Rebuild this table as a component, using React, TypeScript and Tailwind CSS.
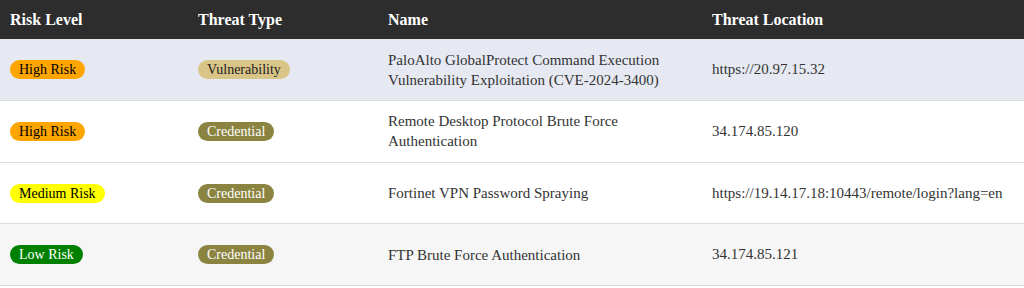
import React from "react";

type Row = {
  risk: string;
  riskClass: string;
  type: string;
  typeClass: string;
  name: string[];
  location: string;
  rowClass: string;
};

const rows: Row[] = [
  {
    risk: "High Risk",
    riskClass: "bg-[#ffa500] text-black",
    type: "Vulnerability",
    typeClass: "bg-[#d9c587] text-[#222]",
    name: ["PaloAlto GlobalProtect Command Execution", "Vulnerability Exploitation (CVE-2024-3400)"],
    location: "https://20.97.15.32",
    rowClass: "bg-[#e6e9f2]",
  },
  {
    risk: "High Risk",
    riskClass: "bg-[#ffa500] text-black",
    type: "Credential",
    typeClass: "bg-[#8b8340] text-white",
    name: ["Remote Desktop Protocol Brute Force", "Authentication"],
    location: "34.174.85.120",
    rowClass: "bg-white",
  },
  {
    risk: "Medium Risk",
    riskClass: "bg-[#ffff00] text-black",
    type: "Credential",
    typeClass: "bg-[#8b8340] text-white",
    name: ["Fortinet VPN Password Spraying"],
    location: "https://19.14.17.18:10443/remote/login?lang=en",
    rowClass: "bg-white",
  },
  {
    risk: "Low Risk",
    riskClass: "bg-[#008000] text-white",
    type: "Credential",
    typeClass: "bg-[#8b8340] text-white",
    name: ["FTP Brute Force Authentication"],
    location: "34.174.85.121",
    rowClass: "bg-[#f6f6f6]",
  },
];

const App = () => {
  return (
    <div className="w-[1024px] h-[288px] bg-white font-['Liberation_Serif',serif] text-[#333]">
      <table className="w-full border-collapse">
        <thead>
          <tr className="bg-[#2d2d2d] text-white h-[39px] text-left text-[16px] font-bold">
            <th className="w-[188px] pl-[10px]">Risk Level</th>
            <th className="w-[190px] pl-[10px]">Threat Type</th>
            <th className="w-[324px] pl-[10px]">Name</th>
            <th className="pl-[10px]">Threat Location</th>
          </tr>
        </thead>
        <tbody className="text-[15px]">
          {rows.map((r, i) => (
            <tr key={i} className={`${r.rowClass} h-[61.6px] border-b border-[#dddddd]`}>
              <td className="pl-[10px]">
                <span className={`${r.riskClass} inline-block rounded-full px-[9px] text-[14px] leading-[19px]`}>{r.risk}</span>
              </td>
              <td className="pl-[10px]">
                <span className={`${r.typeClass} inline-block rounded-full px-[9px] text-[14px] leading-[19px]`}>{r.type}</span>
              </td>
              <td className="pl-[10px] leading-[20px]">
                {r.name.map((n, j) => (
                  <div key={j}>{n}</div>
                ))}
              </td>
              <td className="pl-[10px]">{r.location}</td>
            </tr>
          ))}
        </tbody>
      </table>
    </div>
  );
};

export default App;
